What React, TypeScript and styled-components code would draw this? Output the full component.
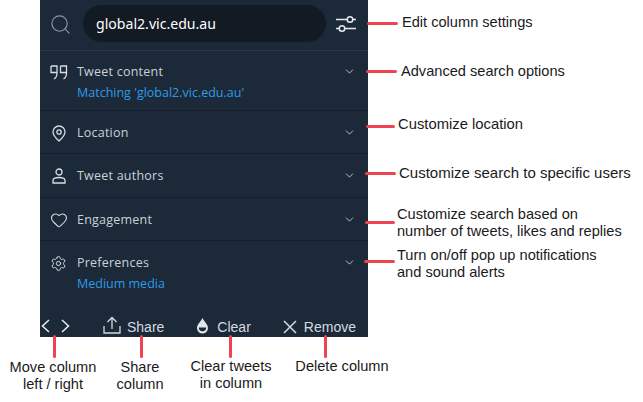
import * as React from 'react';
import styled, { createGlobalStyle } from "styled-components";
import { ChevronDown, Heart, Search, Settings } from "lucide-react";

const Quote = () => (
    <svg width="18" height="15" viewBox="0 0 18 15" fill="none" stroke="currentColor" strokeWidth="1.3">
        <path d="M1 1h6v7c0 3-1 5-3 6M1 1v6.500h6" />
        <path d="M10.500 1h6v7c0 3-1 5-3 6M10.500 1v6.500h6" />
    </svg>
);

const Pin = () => (
    <svg width="14" height="17" viewBox="0 0 14 17" fill="none" stroke="currentColor" strokeWidth="1.3">
        <path d="M7 16C3 12.500 1 9.800 1 7a6 6 0 0 1 12 0c0 2.800-2 5.500-6 9z" />
        <circle cx="7" cy="7" r="2.200" />
    </svg>
);

const Person = () => (
    <svg width="14" height="16" viewBox="0 0 14 16" fill="none" stroke="currentColor" strokeWidth="1.3">
        <circle cx="7" cy="4" r="3" />
        <path d="M1 15v-2.500C1 10.500 3 9.500 7 9.500s6 1 6 3V15z" />
    </svg>
);

const Sliders = () => (
    <svg width="22" height="20" viewBox="0 0 22 20" fill="none" stroke="currentColor" strokeWidth="1.500">
        <path d="M1 5.500h11M18 5.500h3M1 14.500h3M10 14.500h11" />
        <circle cx="15" cy="5.500" r="2.800" />
        <circle cx="7" cy="14.500" r="2.800" />
    </svg>
);

const Upload = () => (
    <svg width="18" height="18" viewBox="0 0 18 18" fill="none" stroke="currentColor" strokeWidth="1.300">
        <path d="M1 10v7h16v-7M9 13V1.500M4.500 6L9 1.500 13.500 6" />
    </svg>
);

const Drop = () => (
    <svg width="13" height="17" viewBox="0 0 13 17">
        <path d="M6.500 1C4.500 5 1 7.500 1 11a5.500 5.500 0 0 0 11 0C12 7.500 8.500 5 6.500 1z" fill="#dfe5ea" />
        <path d="M2.800 10.500h7.400a3.700 3.700 0 0 1-7.400 0z" fill="#1c2938" />
    </svg>
);

const Cross = () => (
    <svg width="14" height="14" viewBox="0 0 14 14" fill="none" stroke="currentColor" strokeWidth="1.500">
        <path d="M1 1l12 12M13 1L1 13" />
    </svg>
);

const Arrow = ({ back }: { back?: boolean }) => (
    <svg width="9" height="14" viewBox="0 0 9 14" fill="none" stroke="currentColor" strokeWidth="1.600">
        <path d={back ? "M8 1L1.500 7 8 13" : "M1 1l6.500 6L1 13"} />
    </svg>
);

type RowData = { icon: React.ReactNode; title: string; detail?: string; height: number; pad: number };

const rows: RowData[] = [
    { icon: <Quote />, title: "Tweet content", detail: "Matching 'global2.vic.edu.au'", height: 60, pad: 11 },
    { icon: <Pin />, title: "Location", height: 43, pad: 12 },
    { icon: <Person />, title: "Tweet authors", height: 44, pad: 12 },
    { icon: <Heart size={18} strokeWidth={1.4} />, title: "Engagement", height: 43, pad: 12 },
    { icon: <Settings size={17} strokeWidth={1.4} />, title: "Preferences", detail: "Medium media", height: 59, pad: 12 },
];

const sideNotes = [
    { top: 14, left: 402, size: 14.6, lines: ["Edit column settings"] },
    { top: 63, left: 401, size: 14.6, lines: ["Advanced search options"] },
    { top: 116, left: 398, size: 14.8, lines: ["Customize location"] },
    { top: 164, left: 399, size: 15, lines: ["Customize search to specific users"] },
    { top: 206, left: 397, size: 14.6, lines: ["Customize search based on", "number of tweets, likes and replies"] },
    { top: 247, left: 397, size: 14.6, lines: ["Turn on/off pop up notifications", "and sound alerts"] },
];

const sideLines = [
    { top: 22, left: 367, length: 31 },
    { top: 70, left: 366, length: 31 },
    { top: 125, left: 366, length: 29 },
    { top: 172, left: 365, length: 31 },
    { top: 221, left: 365, length: 30 },
    { top: 260, left: 364, length: 31 },
];

const bottomNotes = [
    { x: 53, top: 359, lines: ["Move column", "left / right"] },
    { x: 140, top: 359, lines: ["Share", "column"] },
    { x: 231, top: 358, lines: ["Clear tweets", "in column"] },
    { x: 342, top: 358, lines: ["Delete column"] },
];

const bottomLines = [
    { left: 52.5, top: 335, length: 23 },
    { left: 140, top: 335, length: 23 },
    { left: 228.5, top: 335, length: 23 },
    { left: 323.5, top: 335, length: 23 },
];

const App = () => (
    <>
        <GlobalStyle />
        <Page>
            <Panel>
                <Header>
                    <SearchIcon><Search size={23} strokeWidth={1.2} /></SearchIcon>
                    <SearchBox>global2.vic.edu.au</SearchBox>
                    <SettingsButton><Sliders /></SettingsButton>
                </Header>
                {rows.map(row => (
                    <Row key={row.title} $height={row.height} $pad={row.pad}>
                        <RowIcon>{row.icon}</RowIcon>
                        <RowText>
                            <RowTitle>{row.title}</RowTitle>
                            {row.detail && <RowDetail>{row.detail}</RowDetail>}
                        </RowText>
                        <RowChevron><ChevronDown size={13} strokeWidth={1.8} /></RowChevron>
                    </Row>
                ))}
                <Footer>
                    <MoveButtons>
                        <Arrow back />
                        <Arrow />
                    </MoveButtons>
                    <FooterButton $gap={6} $lift={3}><Upload /><span>Share</span></FooterButton>
                    <FooterButton $gap={8} $lift={3}><Drop /><span>Clear</span></FooterButton>
                    <FooterButton $gap={7} $lift={0}><Cross /><span>Remove</span></FooterButton>
                </Footer>
            </Panel>
            {sideLines.map(line => (
                <SideLine key={line.top} $top={line.top} $left={line.left} $length={line.length} />
            ))}
            {bottomLines.map(line => (
                <BottomLine key={line.left} $top={line.top} $left={line.left} $length={line.length} />
            ))}
            {sideNotes.map(note => (
                <SideNote key={note.top} $top={note.top} $left={note.left} $size={note.size}>
                    {note.lines.map(text => <div key={text}>{text}</div>)}
                </SideNote>
            ))}
            {bottomNotes.map(note => (
                <BottomNote key={note.x} $top={note.top} $x={note.x}>
                    {note.lines.map(text => <div key={text}>{text}</div>)}
                </BottomNote>
            ))}
        </Page>
    </>
);

const GlobalStyle = createGlobalStyle`
    html, body {
        margin: 0;
        background: #ffffff;
    }
`;

const Page = styled.div`
    position: relative;
    width: 643px;
    height: 402px;
    overflow: hidden;
    background: #ffffff;
`;

const Panel = styled.div`
    display: flex;
    flex-direction: column;
    width: 328px;
    height: 337px;
    margin-left: 40px;
    background: #1c2938;
    color: #d6dde3;
    font-family: "Open Sans", "Noto Sans", sans-serif;
`;

const Header = styled.div`
    display: flex;
    align-items: center;
    height: 51px;
    box-sizing: border-box;
    padding-bottom: 4px;
    border-bottom: 1px solid #2c3846;
`;

const SearchIcon = styled.div`
    display: flex;
    justify-content: center;
    width: 41px;
    margin: 2px 2px 0 0;
    color: #8a98a5;
`;

const SearchBox = styled.div`
    display: flex;
    align-items: center;
    width: 243px;
    height: 37px;
    box-sizing: border-box;
    padding-left: 13px;
    border-radius: 19px;
    background: #121a24;
    color: #ffffff;
    font-family: "Noto Sans", sans-serif;
    font-size: 14.100px;
`;

const SettingsButton = styled.div`
    display: flex;
    justify-content: center;
    flex: 1;
    margin: 2px 2px 0 0;
    color: #e4e9ed;
`;

const Row = styled.div<{ $height: number; $pad: number }>`
    display: flex;
    align-items: flex-start;
    height: ${props => props.$height}px;
    box-sizing: border-box;
    padding-top: ${props => props.$pad}px;
    border-bottom: 1px solid #151f2b;

    &:nth-last-child(2) {
        border-bottom: none;
    }
`;

const RowIcon = styled.div`
    display: flex;
    justify-content: center;
    width: 37px;
    height: 20px;
    align-items: center;
    color: #d6dde3;
`;

const RowText = styled.div`
    flex: 1;
`;

const RowTitle = styled.div`
    font-size: 12.500px;
    line-height: 20px;
    letter-spacing: 0.230px;
    color: #c9d1d8;
`;

const RowDetail = styled.div`
    font-size: 12.500px;
    line-height: 20px;
    margin-top: 1px;
    color: #2f9be6;
`;

const RowChevron = styled.div`
    display: flex;
    align-items: center;
    height: 18px;
    width: 25px;
    color: #b9c3cc;
`;

const Footer = styled.div`
    display: flex;
    align-items: center;
    gap: 32px;
    flex: 1;
    padding-top: 16px;
    font-family: "Liberation Sans", Arial, sans-serif;
    font-size: 14px;
    color: #d4dae0;
`;

const MoveButtons = styled.div`
    display: flex;
    gap: 11px;
    width: 31px;
    padding-left: 1px;
    margin-top: -1px;
    box-sizing: border-box;
    color: #e4e9ed;
`;

const FooterButton = styled.div<{ $gap: number; $lift: number }>`
    display: flex;
    align-items: center;
    gap: ${props => props.$gap}px;

    svg {
        margin-top: ${props => -props.$lift}px;
    }
`;

const SideLine = styled.div<{ $top: number; $left: number; $length: number }>`
    position: absolute;
    top: ${props => props.$top}px;
    left: ${props => props.$left}px;
    width: ${props => props.$length}px;
    height: 3px;
    border-radius: 2px;
    background: #ee4452;
`;

const BottomLine = styled.div<{ $top: number; $left: number; $length: number }>`
    position: absolute;
    top: ${props => props.$top}px;
    left: ${props => props.$left}px;
    width: 3px;
    height: ${props => props.$length}px;
    border-radius: 2px;
    background: #ee4452;
`;

const SideNote = styled.div<{ $top: number; $left: number; $size: number }>`
    position: absolute;
    top: ${props => props.$top}px;
    left: ${props => props.$left}px;
    font-family: "Liberation Sans", Arial, sans-serif;
    font-size: ${props => props.$size}px;
    line-height: 17px;
    color: #1a1a22;
    white-space: nowrap;
`;

const BottomNote = styled.div<{ $top: number; $x: number }>`
    position: absolute;
    top: ${props => props.$top}px;
    left: ${props => props.$x}px;
    transform: translateX(-50%);
    font-family: "Liberation Sans", Arial, sans-serif;
    font-size: 14.600px;
    line-height: 17px;
    color: #1a1a22;
    text-align: center;
    white-space: nowrap;
`;

export default App;
